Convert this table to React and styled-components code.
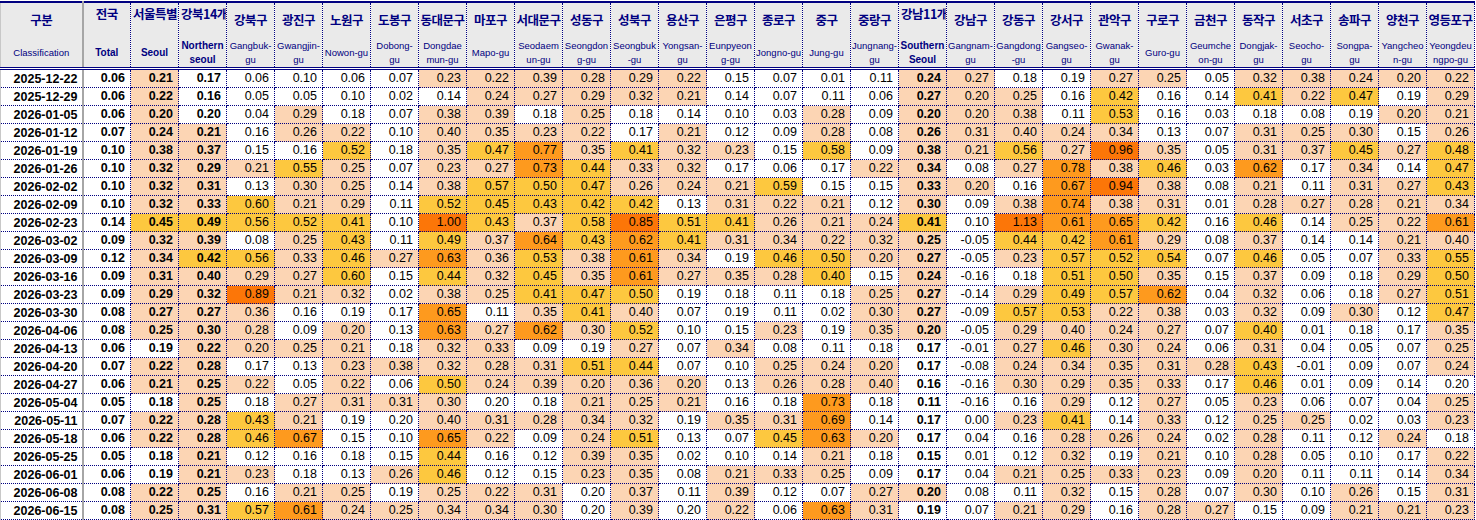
import React from 'react';
import styled, { createGlobalStyle } from 'styled-components';

const GlobalStyle = createGlobalStyle`
    body {
        margin: 0;
        background: #fff;
        overflow: hidden;
    }
`;

const NAVY = '#000080';

const fills = {
    p: '#fcd5b4',
    g: '#fdc83f',
    o: '#fe9a1e',
    d: '#fc7608',
};

const columns = [
    { ko: '전국', en: 'Total', top: true, bold: true },
    { ko: '서울특별시', en: 'Seoul', top: true, bold: true, clip: true },
    { ko: '강북14개구', en: 'Northern|seoul', top: true, bold: true, clip: true },
    { ko: '강북구', en: 'Gangbuk-|gu' },
    { ko: '광진구', en: 'Gwangjin-|gu' },
    { ko: '노원구', en: 'Nowon-gu' },
    { ko: '도봉구', en: 'Dobong-|gu' },
    { ko: '동대문구', en: 'Dongdae|mun-gu' },
    { ko: '마포구', en: 'Mapo-gu' },
    { ko: '서대문구', en: 'Seodaem|un-gu' },
    { ko: '성동구', en: 'Seongdon|g-gu' },
    { ko: '성북구', en: 'Seongbuk|-gu' },
    { ko: '용산구', en: 'Yongsan-|gu' },
    { ko: '은평구', en: 'Eunpyeon|g-gu' },
    { ko: '종로구', en: 'Jongno-gu' },
    { ko: '중구', en: 'Jung-gu' },
    { ko: '중랑구', en: 'Jungnang-|gu' },
    { ko: '강남11개구', en: 'Southern|Seoul', top: true, bold: true, clip: true },
    { ko: '강남구', en: 'Gangnam-|gu' },
    { ko: '강동구', en: 'Gangdong|-gu' },
    { ko: '강서구', en: 'Gangseo-|gu' },
    { ko: '관악구', en: 'Gwanak-|gu' },
    { ko: '구로구', en: 'Guro-gu' },
    { ko: '금천구', en: 'Geumche|on-gu' },
    { ko: '동작구', en: 'Dongjak-|gu' },
    { ko: '서초구', en: 'Seocho-|gu' },
    { ko: '송파구', en: 'Songpa-|gu' },
    { ko: '양천구', en: 'Yangcheo|n-gu' },
    { ko: '영등포구', en: 'Yeongdeu|ngpo-gu' },
];

// value + fill code (p peach, g gold, o orange, d dark orange)
const rows = [
    ['2025-12-22', '0.06 0.21p 0.17 0.06 0.10 0.06 0.07 0.23p 0.22p 0.39p 0.28p 0.29p 0.22p 0.15 0.07 0.01 0.11 0.24p 0.27p 0.18 0.19 0.27p 0.25p 0.05 0.32p 0.38p 0.24p 0.20p 0.22p'],
    ['2025-12-29', '0.06 0.22p 0.16 0.05 0.05 0.10 0.02 0.14 0.24p 0.27p 0.29p 0.32p 0.21p 0.14 0.07 0.11 0.06 0.27p 0.20p 0.25p 0.16 0.42g 0.16 0.14 0.41g 0.22p 0.47g 0.19 0.29p'],
    ['2026-01-05', '0.06 0.20p 0.20 0.04 0.29p 0.18 0.07 0.38p 0.39p 0.18 0.25p 0.18 0.14 0.10 0.03 0.28p 0.09 0.20p 0.20p 0.38p 0.11 0.53g 0.16 0.03 0.18 0.08 0.19 0.20p 0.21p'],
    ['2026-01-12', '0.07 0.24p 0.21p 0.16 0.26p 0.22p 0.10 0.40p 0.35p 0.23p 0.22p 0.17 0.21p 0.12 0.09 0.28p 0.08 0.26p 0.31p 0.40p 0.24p 0.34p 0.13 0.07 0.31p 0.25p 0.30p 0.15 0.26p'],
    ['2026-01-19', '0.10 0.38p 0.37p 0.15 0.16 0.52g 0.18 0.35p 0.47g 0.77o 0.35p 0.41g 0.32p 0.23p 0.15 0.58g 0.09 0.38p 0.21p 0.56g 0.27p 0.96d 0.35p 0.05 0.31p 0.37p 0.45g 0.27p 0.48g'],
    ['2026-01-26', '0.10 0.32p 0.29p 0.21p 0.55g 0.25p 0.07 0.23p 0.27p 0.73o 0.44g 0.33p 0.32p 0.17 0.06 0.17 0.22p 0.34p 0.08 0.27p 0.78o 0.38p 0.46g 0.03 0.62o 0.17 0.34p 0.14 0.47g'],
    ['2026-02-02', '0.10 0.32p 0.31p 0.13 0.30p 0.25p 0.14 0.38p 0.57g 0.50g 0.47g 0.26p 0.24p 0.21p 0.59g 0.15 0.15 0.33p 0.20p 0.16 0.67o 0.94d 0.38p 0.08 0.21p 0.11 0.31p 0.27p 0.43g'],
    ['2026-02-09', '0.10 0.32p 0.33p 0.60g 0.21p 0.29p 0.11 0.52g 0.45g 0.43g 0.42g 0.42g 0.13 0.31p 0.22p 0.21p 0.12 0.30p 0.09 0.38p 0.74o 0.38p 0.31p 0.01 0.28p 0.27p 0.28p 0.21p 0.34p'],
    ['2026-02-23', '0.14 0.45g 0.49g 0.56g 0.52g 0.41g 0.10 1.00d 0.43g 0.37p 0.58g 0.85d 0.51g 0.41g 0.26p 0.21p 0.24p 0.41g 0.10 1.13d 0.61o 0.65o 0.42g 0.16 0.46g 0.14 0.25p 0.22p 0.61o'],
    ['2026-03-02', '0.09 0.32p 0.39p 0.08 0.25p 0.43g 0.11 0.49g 0.37p 0.64o 0.43g 0.62o 0.41g 0.31p 0.34p 0.22p 0.32p 0.25p -0.05 0.44g 0.42g 0.61o 0.29p 0.08 0.37p 0.14 0.14 0.21p 0.40p'],
    ['2026-03-09', '0.12 0.34p 0.42g 0.56g 0.33p 0.46g 0.27p 0.63o 0.36p 0.53g 0.38p 0.61o 0.34p 0.19 0.46g 0.50g 0.20p 0.27p -0.05 0.23p 0.57g 0.52g 0.54g 0.07 0.46g 0.05 0.07 0.33p 0.55g'],
    ['2026-03-16', '0.09 0.31p 0.40p 0.29p 0.27p 0.60g 0.15 0.44g 0.32p 0.45g 0.35p 0.61o 0.27p 0.35p 0.28p 0.40g 0.15 0.24p -0.16 0.18 0.51g 0.50g 0.35p 0.15 0.37p 0.09 0.18 0.29p 0.50g'],
    ['2026-03-23', '0.09 0.29p 0.32p 0.89d 0.21p 0.32p 0.02 0.38p 0.25p 0.41g 0.47g 0.50g 0.19 0.18 0.11 0.18 0.25p 0.27p -0.14 0.29p 0.49g 0.57g 0.62o 0.04 0.32p 0.06 0.18 0.27p 0.51g'],
    ['2026-03-30', '0.08 0.27p 0.27p 0.36p 0.16 0.19 0.17 0.65o 0.11 0.35p 0.41g 0.40p 0.07 0.19 0.11 0.02 0.30p 0.27p -0.09 0.57g 0.53g 0.22p 0.38p 0.03 0.32p 0.09 0.30p 0.12 0.47g'],
    ['2026-04-06', '0.08 0.25p 0.30p 0.28p 0.09 0.20p 0.13 0.63o 0.27p 0.62o 0.30p 0.52g 0.10 0.15 0.23p 0.19 0.35p 0.20p -0.05 0.29p 0.40p 0.24p 0.27p 0.07 0.40g 0.01 0.18 0.17 0.35p'],
    ['2026-04-13', '0.06 0.19 0.22p 0.20p 0.25p 0.21p 0.18 0.32p 0.33p 0.09 0.19 0.27p 0.07 0.34p 0.08 0.11 0.18 0.17 -0.01 0.27p 0.46g 0.30p 0.24p 0.06 0.31p 0.04 0.05 0.07 0.25p'],
    ['2026-04-20', '0.07 0.22p 0.28p 0.17 0.13 0.23p 0.38p 0.32p 0.28p 0.31p 0.51g 0.44g 0.07 0.10 0.25p 0.24p 0.20p 0.17 -0.08 0.24p 0.34p 0.35p 0.31p 0.28p 0.43g -0.01 0.09 0.07 0.24p'],
    ['2026-04-27', '0.06 0.21p 0.25p 0.22p 0.05 0.22p 0.06 0.50g 0.24p 0.39p 0.20p 0.36p 0.20p 0.13 0.26p 0.28p 0.40p 0.16 -0.16 0.30p 0.29p 0.35p 0.33p 0.17 0.46g 0.01 0.09 0.14 0.20'],
    ['2026-05-04', '0.05 0.18 0.25p 0.18 0.27p 0.31p 0.31p 0.30p 0.20 0.18 0.21p 0.25p 0.21p 0.16 0.18 0.73o 0.18 0.11 -0.16 0.16 0.29p 0.12 0.27p 0.05 0.23p 0.06 0.07 0.04 0.25p'],
    ['2026-05-11', '0.07 0.22p 0.28p 0.43g 0.21p 0.19 0.20 0.40p 0.31p 0.28p 0.34p 0.32p 0.19 0.35p 0.31p 0.69o 0.14 0.17 0.00 0.23p 0.41g 0.14 0.33p 0.12 0.25p 0.25p 0.02 0.03 0.23p'],
    ['2026-05-18', '0.06 0.22p 0.28p 0.46g 0.67o 0.15 0.10 0.65o 0.22p 0.09 0.24p 0.51g 0.13 0.07 0.45g 0.63o 0.20p 0.17 0.04 0.16 0.28p 0.26p 0.24p 0.02 0.28p 0.11 0.12 0.24p 0.18'],
    ['2026-05-25', '0.05 0.18 0.21p 0.12 0.16 0.18 0.15 0.44g 0.16 0.12 0.39p 0.35p 0.02 0.10 0.14 0.21p 0.18 0.15 0.01 0.12 0.32p 0.19 0.21p 0.10 0.28p 0.05 0.10 0.17 0.22p'],
    ['2026-06-01', '0.06 0.19 0.21p 0.23p 0.18 0.13 0.26p 0.46g 0.12 0.15 0.23p 0.35p 0.08 0.21p 0.33p 0.25p 0.09 0.17 0.04 0.21p 0.25p 0.33p 0.23p 0.09 0.20p 0.11 0.11 0.14 0.34p'],
    ['2026-06-08', '0.08 0.22p 0.25p 0.16 0.21p 0.25p 0.19 0.25p 0.22p 0.31p 0.20 0.37p 0.11 0.39p 0.12 0.07 0.27p 0.20p 0.08 0.11 0.32p 0.15 0.28p 0.07 0.30p 0.10 0.26p 0.15 0.31p'],
    ['2026-06-15', '0.08 0.25p 0.31p 0.57g 0.61o 0.24p 0.25p 0.34p 0.34p 0.30p 0.20 0.39p 0.20 0.22p 0.06 0.63o 0.31p 0.19 0.07 0.21p 0.29p 0.16 0.28p 0.27p 0.15 0.09 0.21p 0.21p 0.23p'],
];

const parseCell = (raw) => {
    const m = raw.match(/^(-?\d+\.\d+)([pgod]?)$/);
    return { value: m[1], fill: m[2] ? fills[m[2]] : '#fff' };
};

const Sheet = styled.div`
    padding-top: 1px;
    width: 1474px;
`;

const Table = styled.table`
    border-collapse: collapse;
    table-layout: fixed;
    width: 1474px;
    border-top: 2px solid ${NAVY};
`;

const HeadCell = styled.th`
    padding: 0;
    height: 64px;
    vertical-align: top;
    background: #eaeaea;
    border-left: 1px dotted ${NAVY};
    border-right: 1px dotted ${NAVY};
    border-bottom: 3px double ${NAVY};
    overflow: hidden;
`;

const CornerCell = styled(HeadCell)`
    border-left: 1px solid #c8c8c8;
    border-right: 2px solid #a6a6a6;
`;

const KoName = styled.div`
    height: 35px;
    display: flex;
    align-items: ${({ $top }) => ($top ? 'flex-start' : 'center')};
    justify-content: ${({ $clip }) => ($clip ? 'flex-start' : 'center')};
    padding: ${({ $top, $clip }) => ($top ? `1px 0 0 ${$clip ? 2 : 0}px` : '0 0 2px 0')};
    box-sizing: border-box;
    overflow: hidden;
    white-space: nowrap;
    color: ${NAVY};
    font-family: 'Noto Sans CJK KR', 'Noto Sans', sans-serif;
    font-size: 12.5px;
    font-weight: 700;
    letter-spacing: -0.5px;
`;

const EnName = styled.div`
    height: 29px;
    display: flex;
    flex-direction: column;
    align-items: center;
    justify-content: center;
    white-space: nowrap;
    color: ${NAVY};
    font-family: 'Liberation Sans', Arial, sans-serif;
    font-size: ${({ $bold }) => ($bold ? '10px' : '9.5px')};
    font-weight: ${({ $bold }) => ($bold ? 700 : 400)};
    line-height: 14px;
`;

const Row = styled.tr`
    height: 18px;
`;

const DateCell = styled.td`
    padding: 0 4px 0 0;
    text-align: right;
    border-left: 1px solid #c8c8c8;
    border-right: 2px solid #a6a6a6;
    border-bottom: 1px dotted ${NAVY};
    font-family: 'Liberation Sans', Arial, sans-serif;
    font-size: 12.5px;
    font-weight: 700;
    color: #000;
    white-space: nowrap;
`;

const ValueCell = styled.td`
    padding: 0 5px 0 0;
    text-align: right;
    background: ${({ $fill }) => $fill};
    border-left: 1px dotted ${NAVY};
    border-right: 1px dotted ${NAVY};
    border-bottom: 1px dotted ${NAVY};
    font-family: 'Liberation Sans', Arial, sans-serif;
    font-size: 12.5px;
    font-weight: ${({ $bold }) => ($bold ? 700 : 400)};
    color: #000;
    white-space: nowrap;
    line-height: 17px;
`;

const App = () => {
    return (
        <Sheet>
            <GlobalStyle />
            <Table>
                <colgroup>
                    <col style={{ width: 82 }} />
                    {columns.map((c) => (
                        <col key={c.ko} style={{ width: 48 }} />
                    ))}
                </colgroup>
                <thead>
                    <tr>
                        <CornerCell>
                            <KoName>구분</KoName>
                            <EnName>Classification</EnName>
                        </CornerCell>
                        {columns.map((c) => (
                            <HeadCell key={c.ko}>
                                <KoName $top={c.top} $clip={c.clip}>
                                    {c.ko}
                                </KoName>
                                <EnName $bold={c.bold}>
                                    {c.en.split('|').map((line) => (
                                        <span key={line}>{line}</span>
                                    ))}
                                </EnName>
                            </HeadCell>
                        ))}
                    </tr>
                </thead>
                <tbody>
                    {rows.map(([date, line]) => (
                        <Row key={date}>
                            <DateCell>{date}</DateCell>
                            {line.split(' ').map((raw, i) => {
                                const cell = parseCell(raw);
                                return (
                                    <ValueCell key={i} $fill={cell.fill} $bold={columns[i].bold}>
                                        {cell.value}
                                    </ValueCell>
                                );
                            })}
                        </Row>
                    ))}
                </tbody>
            </Table>
        </Sheet>
    );
};

export default App;
